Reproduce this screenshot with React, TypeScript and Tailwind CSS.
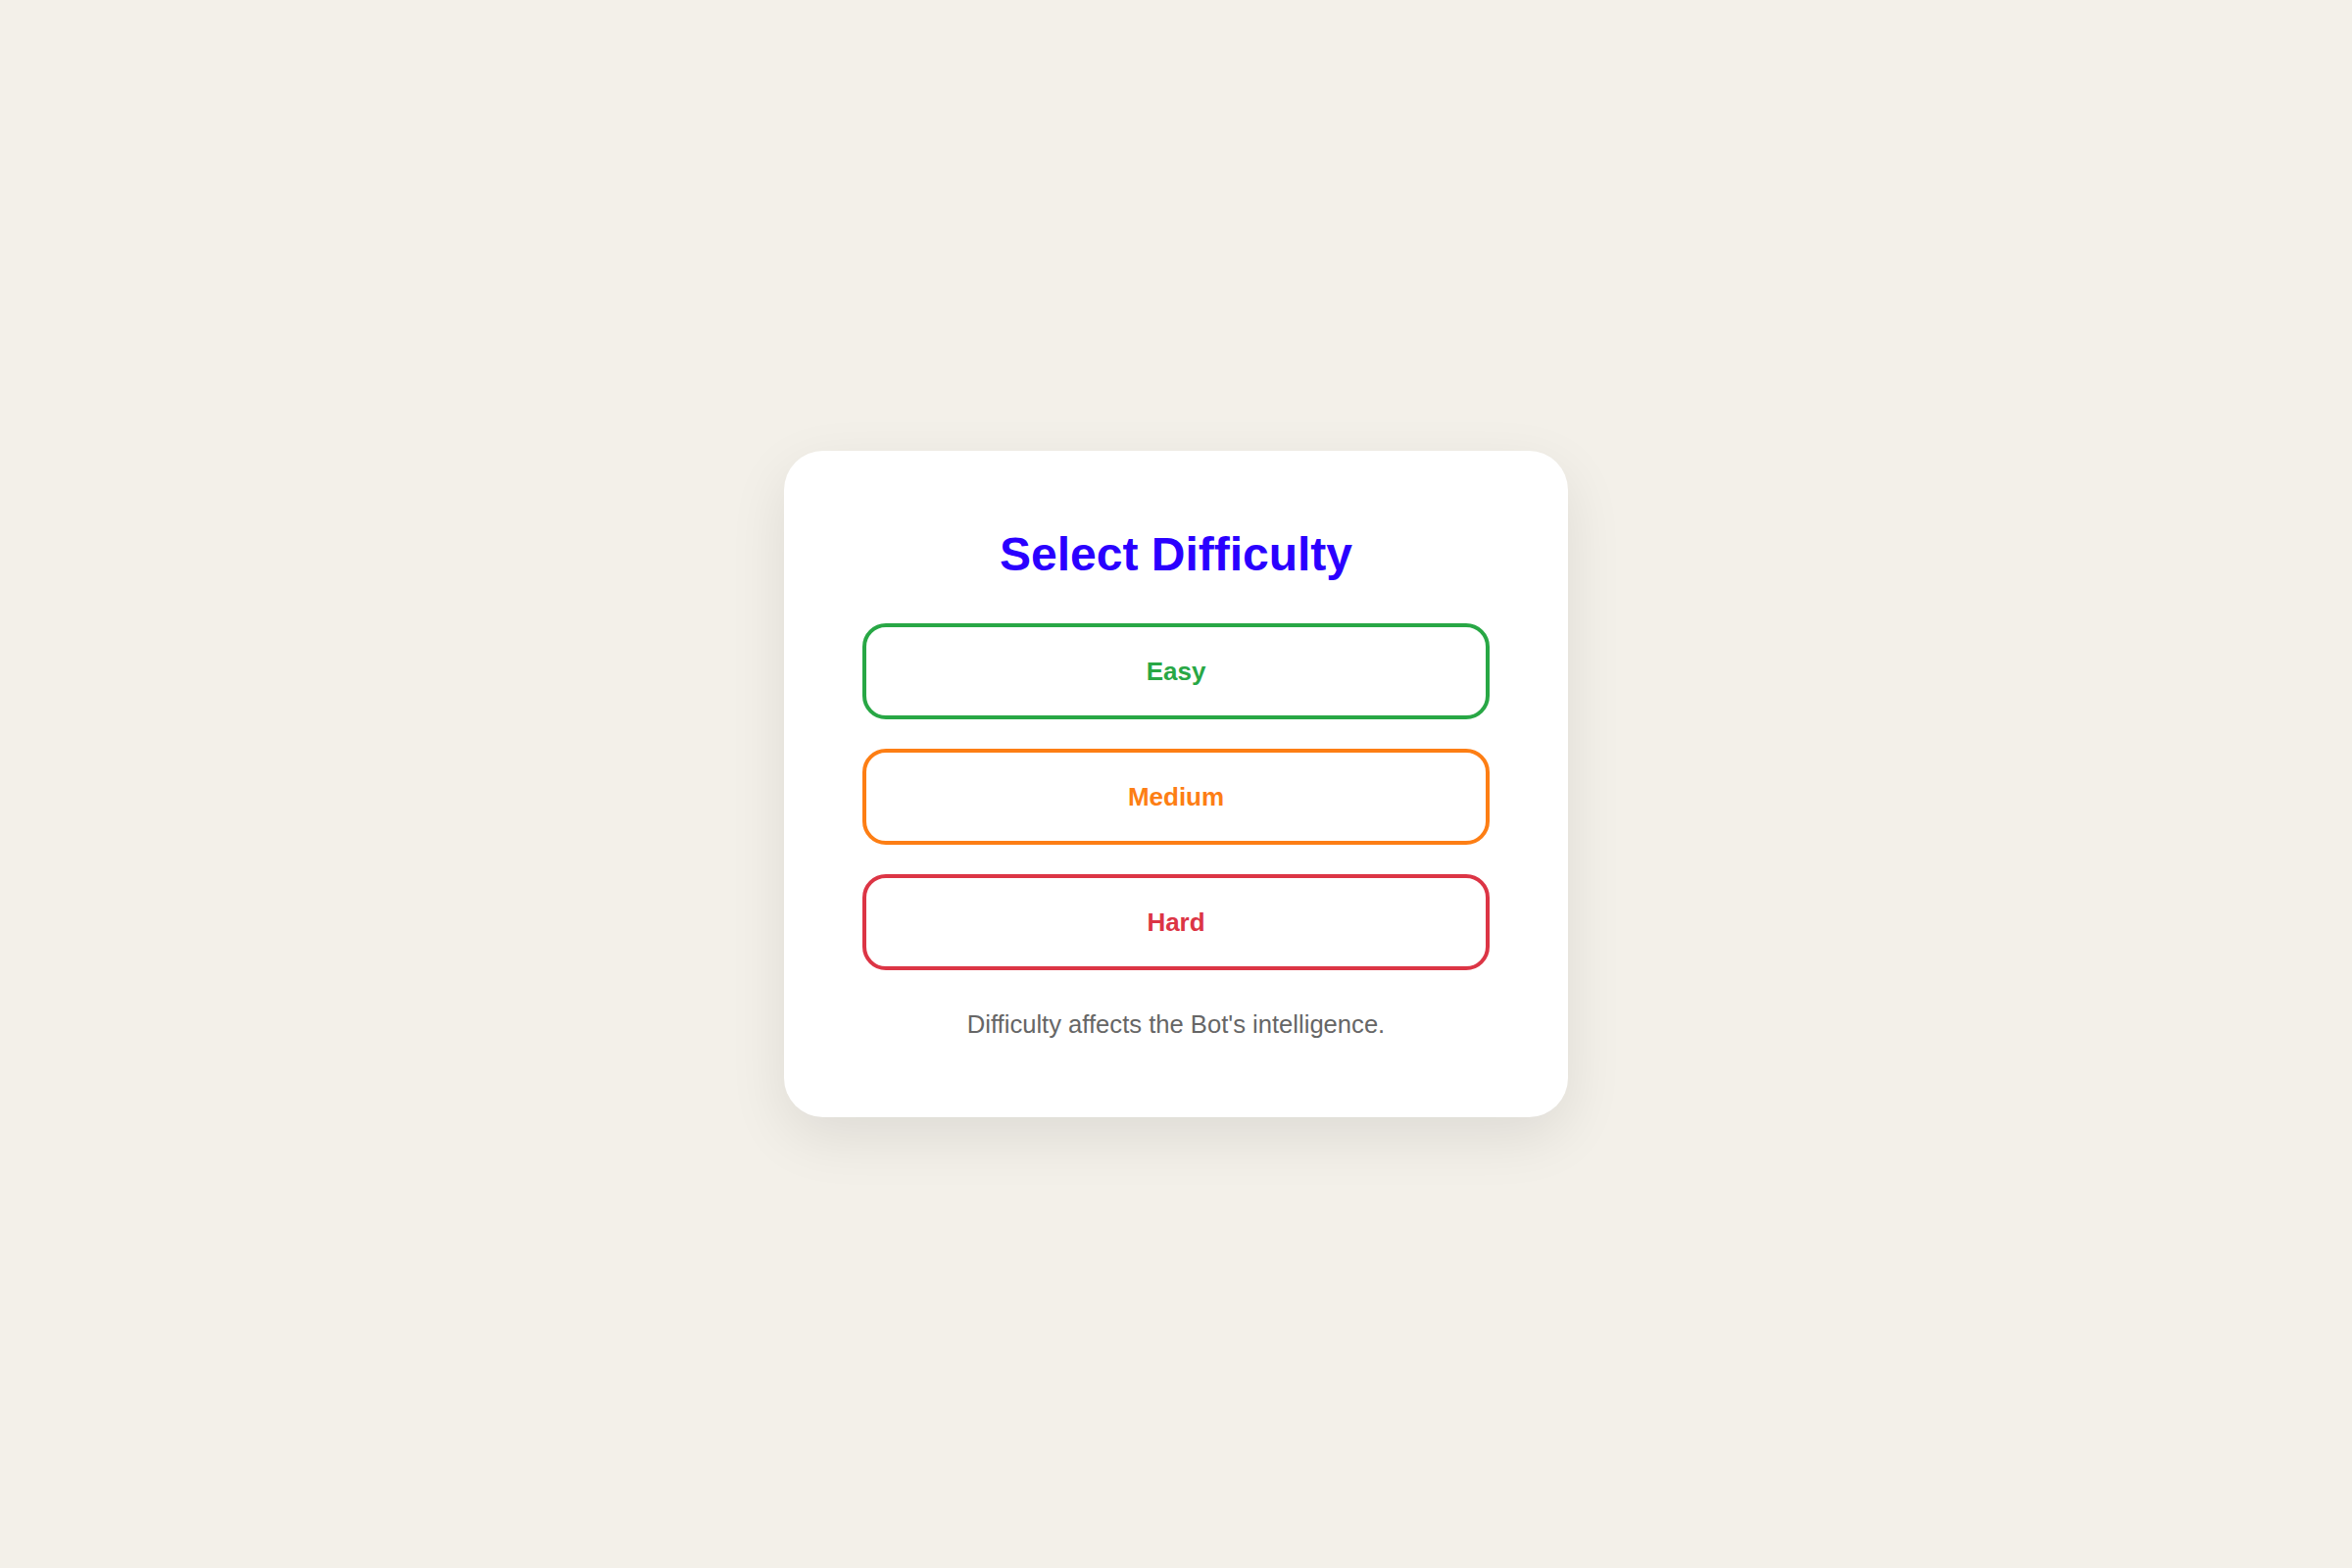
import React from "react";

type Level = {
  label: string;
  border: string;
  text: string;
};

const levels: Level[] = [
  { label: "Easy", border: "border-[#28a745]", text: "text-[#28a745]" },
  { label: "Medium", border: "border-[#fd7e14]", text: "text-[#fd7e14]" },
  { label: "Hard", border: "border-[#dc3545]", text: "text-[#dc3545]" },
];

export default function App() {
  return (
    <div
      className="min-h-screen w-full bg-[#f3f0e9] flex items-center justify-center"
      style={{ fontFamily: '"Liberation Sans", Arial, sans-serif' }}
    >
      <div className="w-[800px] bg-white rounded-[40px] shadow-[0_20px_60px_rgba(0,0,0,0.09)] pt-[78px] px-[80px] pb-[80px] flex flex-col items-center">
        <h1 className="text-[48px] leading-[56px] font-bold text-[#2a00ff] text-center">
          Select Difficulty
        </h1>
        <div className="mt-[42px] w-full flex flex-col gap-[30px]">
          {levels.map((l) => (
            <button
              key={l.label}
              type="button"
              className={`w-full h-[98px] bg-white border-4 rounded-[24px] flex items-center justify-center text-[26px] font-bold ${l.border} ${l.text}`}
            >
              {l.label}
            </button>
          ))}
        </div>
        <p className="mt-[40px] text-[25.6px] leading-[30px] text-[#666666] text-center">
          Difficulty affects the Bot's intelligence.
        </p>
      </div>
    </div>
  );
}
